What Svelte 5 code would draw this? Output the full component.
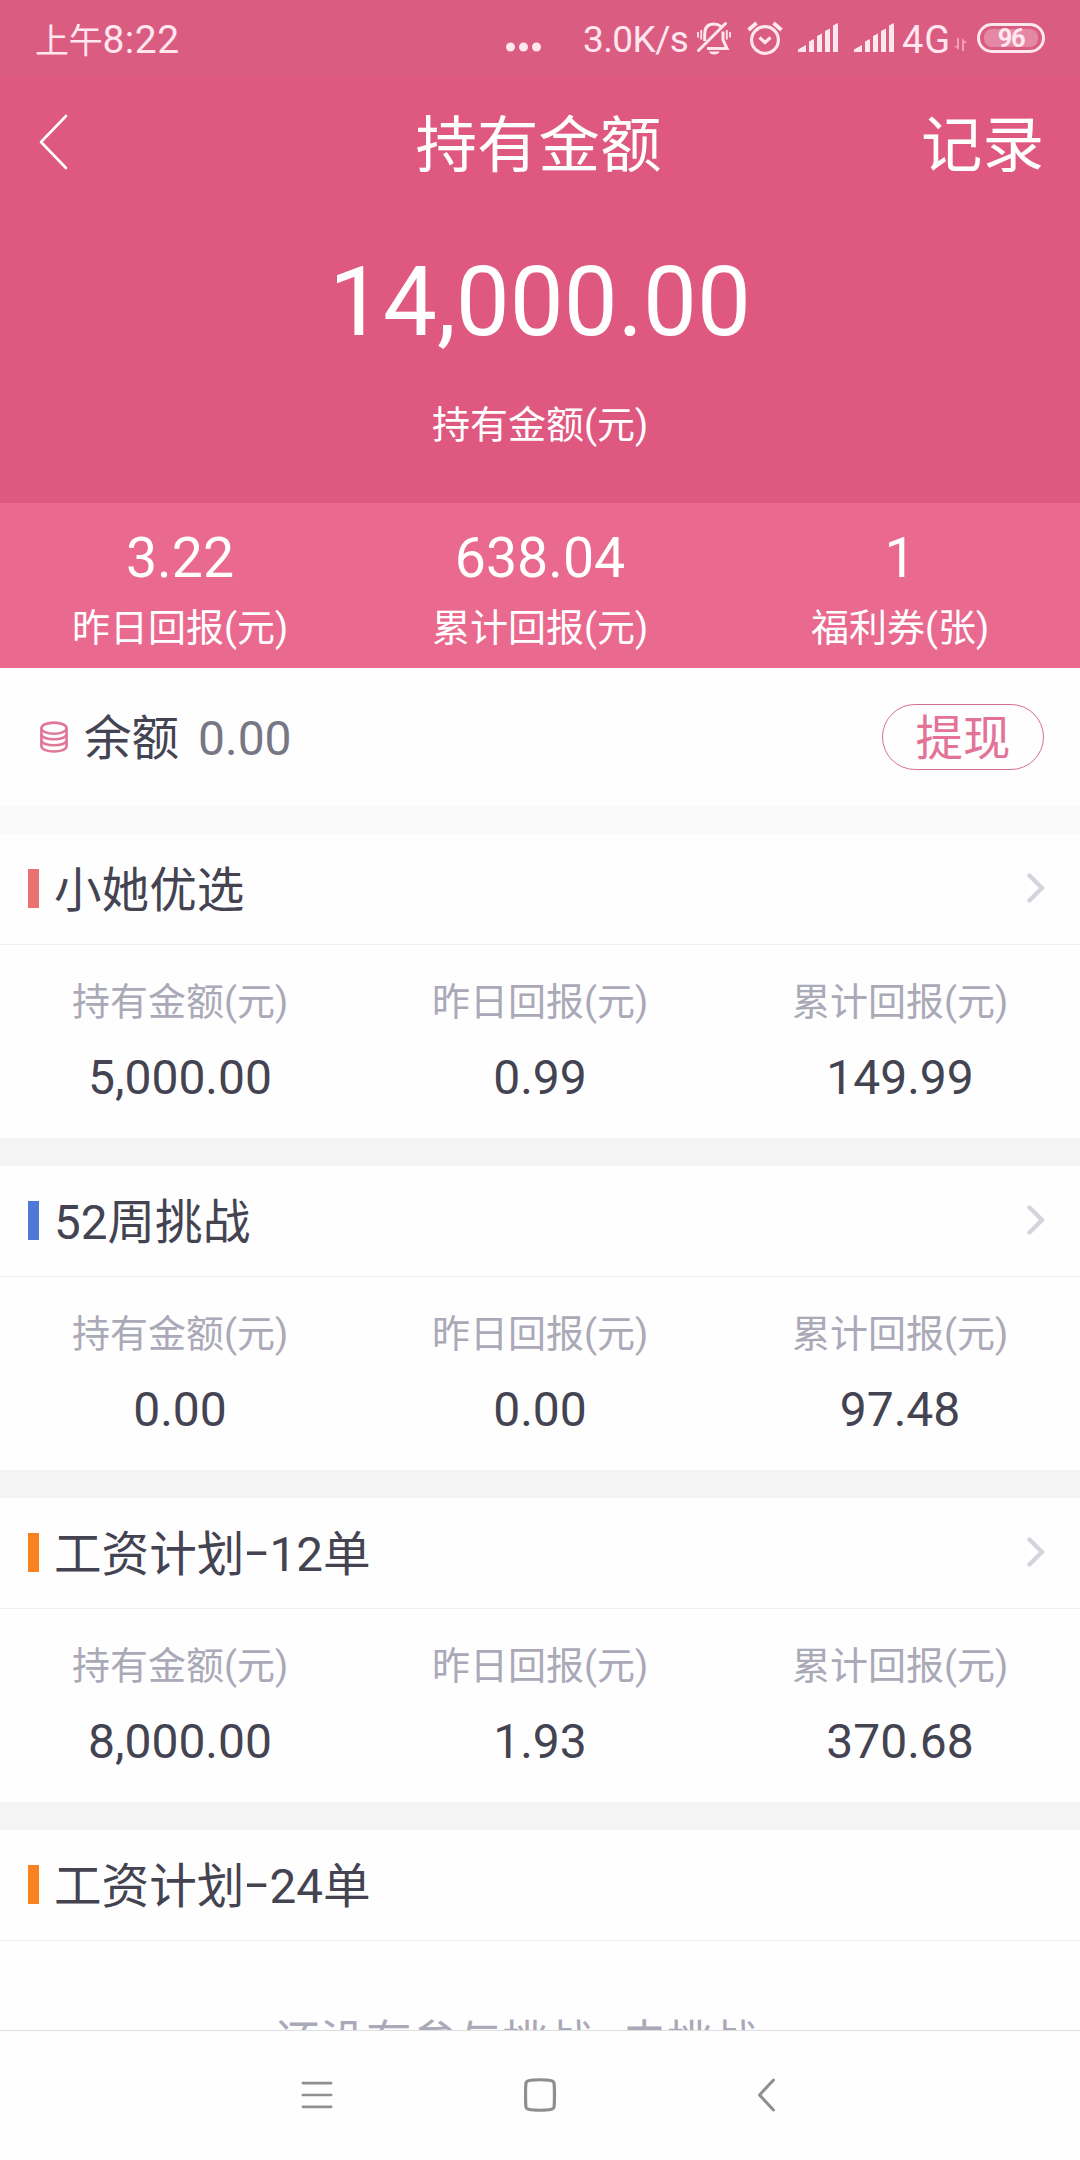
<script>
	const summary = [
		{ value: '3.22', label: '昨日回报(元)' },
		{ value: '638.04', label: '累计回报(元)' },
		{ value: '1', label: '福利券(张)' }
	];

	const labels = ['持有金额(元)', '昨日回报(元)', '累计回报(元)'];

	const plans = [
		{ name: ['小她优选'], color: 'red', values: ['5,000.00', '0.99', '149.99'] },
		{ name: ['52周挑战'], color: 'blue', values: ['0.00', '0.00', '97.48'] },
		{ name: ['工资计划', '12单'], color: 'orange', values: ['8,000.00', '1.93', '370.68'] },
		{ name: ['工资计划', '24单'], color: 'orange', values: null }
	];
</script>

{#snippet signal()}
	<svg class="signal" width="40" height="30" viewBox="0 0 40 30">
		<path d="M0 29v-2.500l8-4.500v7zM11 29V18.500l5-2.500v13zM19 29V13l5-2.500V29zM27 29V8l5-2.500V29zM35 29V2.500L40 0v29z" />
	</svg>
{/snippet}

<div class="screen">
	<div class="status">
		<span class="time"><span class="ampm">上午</span>8:22</span>
		<svg class="dots" width="36" height="10" viewBox="0 0 36 10">
			<circle cx="4.500" cy="5" r="4.500" />
			<circle cx="17.500" cy="5" r="4.500" />
			<circle cx="30.500" cy="5" r="4.500" />
		</svg>
		<span class="speed">3.0K/s</span>
		<svg class="bell" width="34" height="34" viewBox="0 0 34 34">
			<g fill="none" stroke="currentColor" stroke-width="3">
				<path d="M7.700 20V13C7.700 6 11 3 17 3c3 0 5 .8 7 2.500" />
				<path d="M26 10.500V19l4 8.500H10" />
				<path d="M1.500 29.500 28.500 2.500" stroke-linecap="round" />
				<path d="M4.200 9v9.500M1 11v5.500M29.800 9v9.500M33 11v5.500" stroke-width="1.800" />
			</g>
			<path d="M12 30.500h10.500c-1 4-9.500 4-10.500 0z" />
		</svg>
		<svg class="alarm" width="36" height="36" viewBox="0 0 36 36">
			<g fill="none" stroke="currentColor" stroke-width="3.200">
				<circle cx="18" cy="20" r="13.400" />
				<path d="M12.500 17.500 18 22.500l5.500-5" />
				<path d="M1.500 10 9.500 3M34.500 10l-8-7" stroke-width="3.800" />
			</g>
		</svg>
		{@render signal()}
		{@render signal()}
		<span class="network">4G</span>
		<svg class="data" width="13" height="14" viewBox="0 0 13 14">
			<path d="M3 0h2v12L0 8h3zM8 13V0l5 5h-3v8z" />
		</svg>
		<span class="battery"><span class="charge">96</span></span>
	</div>

	<header>
		<div class="bar">
			<svg width="30" height="56" viewBox="0 0 30 56" fill="none" stroke="#fff" stroke-width="2.600">
				<path d="M27 2 2 28l25 26" stroke-linecap="round" stroke-linejoin="round" />
			</svg>
			<h1>持有金额</h1>
			<span class="record">记录</span>
		</div>
		<div class="total">14,000.00</div>
		<div class="total-label">持有金额(元)</div>
	</header>

	<div class="summary">
		{#each summary as item}
			<div class="col">
				<span class="num">{item.value}</span>
				<span class="label">{item.label}</span>
			</div>
		{/each}
	</div>

	<div class="balance">
		<svg width="28" height="32" viewBox="0 0 28 32" fill="none" stroke="#e07898" stroke-width="2.600">
			<ellipse cx="14" cy="7.200" rx="12.600" ry="5.600" />
			<path d="M1.400 7.200V25c0 7.400 25.200 7.400 25.200 0V7.200" />
			<path d="M1.400 13c0 7 25.200 7 25.200 0M1.400 19c0 7 25.200 7 25.200 0" />
		</svg>
		<span class="name">余额</span>
		<span class="amount">0.00</span>
		<button>提现</button>
	</div>

	<main>
		{#each plans as plan}
			<section>
				<div class="head">
					<i class={plan.color}></i>
					<h2>
						{plan.name[0]}{#if plan.name[1]}<span class="dash">-</span>{plan.name[1]}{/if}
					</h2>
					{#if plan.values}
						<svg width="18" height="30" viewBox="0 0 18 30" fill="none" stroke="#d4d4dc" stroke-width="4.400">
							<path d="M2.500 2.500 15 15 2.500 27.500" stroke-linecap="round" />
						</svg>
					{/if}
				</div>
				{#if plan.values}
					<div class="values">
						{#each plan.values as value, i}
							<div class="col">
								<span class="label">{labels[i]}</span>
								<span class="num">{value}</span>
							</div>
						{/each}
					</div>
				{:else}
					<p class="empty">还没有参与挑战<span class="comma">，</span>去挑战</p>
				{/if}
			</section>
		{/each}
	</main>

	<nav>
		<svg viewBox="0 0 34 34">
			<path d="M3 3.500h28M3 17h28M3 30.500h28" transform="translate(0 2) scale(1 0.880)" />
		</svg>
		<svg viewBox="0 0 34 34">
			<path d="M17 2.500c10 0 12 .8 12.800 2.500.8 2 .8 22 0 24-.8 1.700-2.800 2.500-12.800 2.500S5 30.700 4.200 29c-.8-2-.8-22 0-24C5 3.300 7 2.500 17 2.500z" transform="translate(16 17) scale(1.080 1.050) translate(-17 -17)" />
		</svg>
		<svg viewBox="0 0 34 34">
			<path d="M25.500 2 11.500 17l14 15" />
		</svg>
	</nav>
</div>

<style>
	:global(body) {
		margin: 0;
		background: #fff;
	}

	.screen {
		width: 1080px;
		height: 2160px;
		display: flex;
		flex-direction: column;
		overflow: hidden;
		background: #fefefe;
		color: #444352;
		font-family: Roboto, 'Noto Sans CJK SC', sans-serif;
	}

	h1,
	h2,
	p {
		margin: 0;
		font-weight: 400;
	}

	svg {
		display: block;
		flex-shrink: 0;
	}

	.status {
		height: 76px;
		flex-shrink: 0;
		box-sizing: border-box;
		padding: 0 35px;
		display: flex;
		align-items: center;
		background: #da5c81;
		color: #ffe6ef;
		fill: currentColor;
		line-height: 76px;
		white-space: nowrap;
	}

	.time {
		width: 471px;
		font-size: 39px;
		letter-spacing: 0.5px;
		padding-top: 4px;
	}

	.ampm {
		font-size: 34px;
		letter-spacing: -0.3px;
	}

	.dots {
		margin-top: 18px;
	}

	.speed {
		width: 112px;
		margin-left: 41px;
		font-size: 37px;
		letter-spacing: -0.6px;
		padding-top: 4px;
	}

	.bell {
		margin-left: 2px;
	}

	.alarm {
		margin: 0 15px 0 16px;
	}

	.signal {
		margin-right: 16px;
	}

	.network {
		width: 52px;
		margin-left: -8px;
		font-size: 38px;
		letter-spacing: 1px;
		padding-top: 4px;
	}

	.data {
		margin-top: 14px;
		opacity: 0.5;
	}

	.battery {
		box-sizing: border-box;
		width: 68px;
		height: 30px;
		margin-left: 10px;
		padding: 3px 4px;
		border: 3px solid currentColor;
		border-radius: 15px;
	}

	.charge {
		display: block;
		height: 18px;
		border-radius: 8px;
		background: #e588a5;
		font-size: 25.5px;
		font-weight: 700;
		letter-spacing: -1.5px;
		line-height: 19px;
		text-align: center;
	}

	header {
		height: 427px;
		flex-shrink: 0;
		background: #df5880;
		color: #fff;
		text-align: center;
	}

	.bar {
		height: 140px;
		padding: 0 36px 0 39px;
		display: grid;
		grid-template-columns: 1fr auto 1fr;
		align-items: center;
		line-height: 140px;
	}

	.bar svg {
		margin-top: -8px;
	}

	h1,
	.record {
		font-size: 61.5px;
	}

	h1 {
		margin: 0 3px 0 -3px;
	}

	.record {
		text-align: right;
	}

	.total {
		margin-top: 26px;
		font-size: 96px;
		line-height: 120px;
	}

	.total-label {
		margin-top: 39px;
		font-size: 38px;
		line-height: 48px;
	}

	.summary {
		height: 165px;
		flex-shrink: 0;
		display: flex;
		background: #ea698f;
		color: #fff;
	}

	.col {
		flex: 1;
		display: flex;
		flex-direction: column;
		align-items: center;
	}

	.summary .num {
		margin-top: 26px;
		font-size: 55.5px;
		line-height: 60px;
	}

	.summary .label {
		margin-top: 19px;
		line-height: 40px;
	}

	.label {
		font-size: 38px;
	}

	.balance {
		height: 138px;
		flex-shrink: 0;
		box-sizing: border-box;
		padding: 0 36px 0 40px;
		display: flex;
		align-items: center;
		font-size: 48px;
		line-height: 66px;
	}

	.name {
		margin: 4px 1px 0 16px;
		font-size: 47.5px;
	}

	.amount {
		margin: 3px 0 0 18px;
		color: #777685;
	}

	button {
		box-sizing: border-box;
		width: 162px;
		height: 66px;
		margin-left: auto;
		padding: 4px 0 0;
		border: 1px solid #d6708f;
		border-radius: 33px;
		background: none;
		color: #e27396;
		font: inherit;
		font-size: 47.5px;
		line-height: 61px;
	}

	main {
		flex: 1;
		min-height: 0;
		overflow: hidden;
	}

	section {
		border-top: 28px solid #f5f5f5;
	}

	section:first-child {
		border-color: #fafafa;
	}

	.head {
		height: 110px;
		padding: 0 35px 0 28px;
		display: flex;
		align-items: center;
		border-bottom: 1px solid #eee;
	}

	.head i {
		width: 11px;
		height: 39px;
		margin: 0 15px 1px 0;
	}

	.red {
		background: #ec7272;
	}

	.blue {
		background: #4e79d6;
	}

	.orange {
		background: #f98220;
	}

	h2 {
		padding-top: 4px;
		font-size: 47.6px;
		line-height: 64px;
	}

	/* the hyphen is drawn wider and higher than the font's own */
	.dash {
		display: inline-block;
		margin: 0 6px;
		transform: translateY(-3px) scaleX(1.7);
	}

	.head svg {
		margin: 0 0 2px auto;
	}

	.values {
		height: 193px;
		display: flex;
	}

	.values .label {
		margin-top: 35px;
		line-height: 44px;
		color: #aaa9b7;
	}

	.values .num {
		margin-top: 24px;
		font-size: 48px;
		line-height: 60px;
	}

	.empty {
		padding: 72px 0 0 275px;
		font-size: 45.5px;
		line-height: 60px;
		color: #aaa9b7;
	}

	.comma {
		font-size: 28px;
	}

	nav {
		height: 130px;
		flex-shrink: 0;
		box-sizing: border-box;
		border-top: 1px solid #dedede;
		padding: 0 298px 2px 300px;
		display: flex;
		align-items: center;
		justify-content: space-between;
		background: #fefefe;
	}

	nav svg {
		width: 34px;
		height: 34px;
		fill: none;
		stroke: #8f8f8f;
		stroke-width: 3;
		stroke-linecap: round;
		stroke-linejoin: round;
	}
</style>
